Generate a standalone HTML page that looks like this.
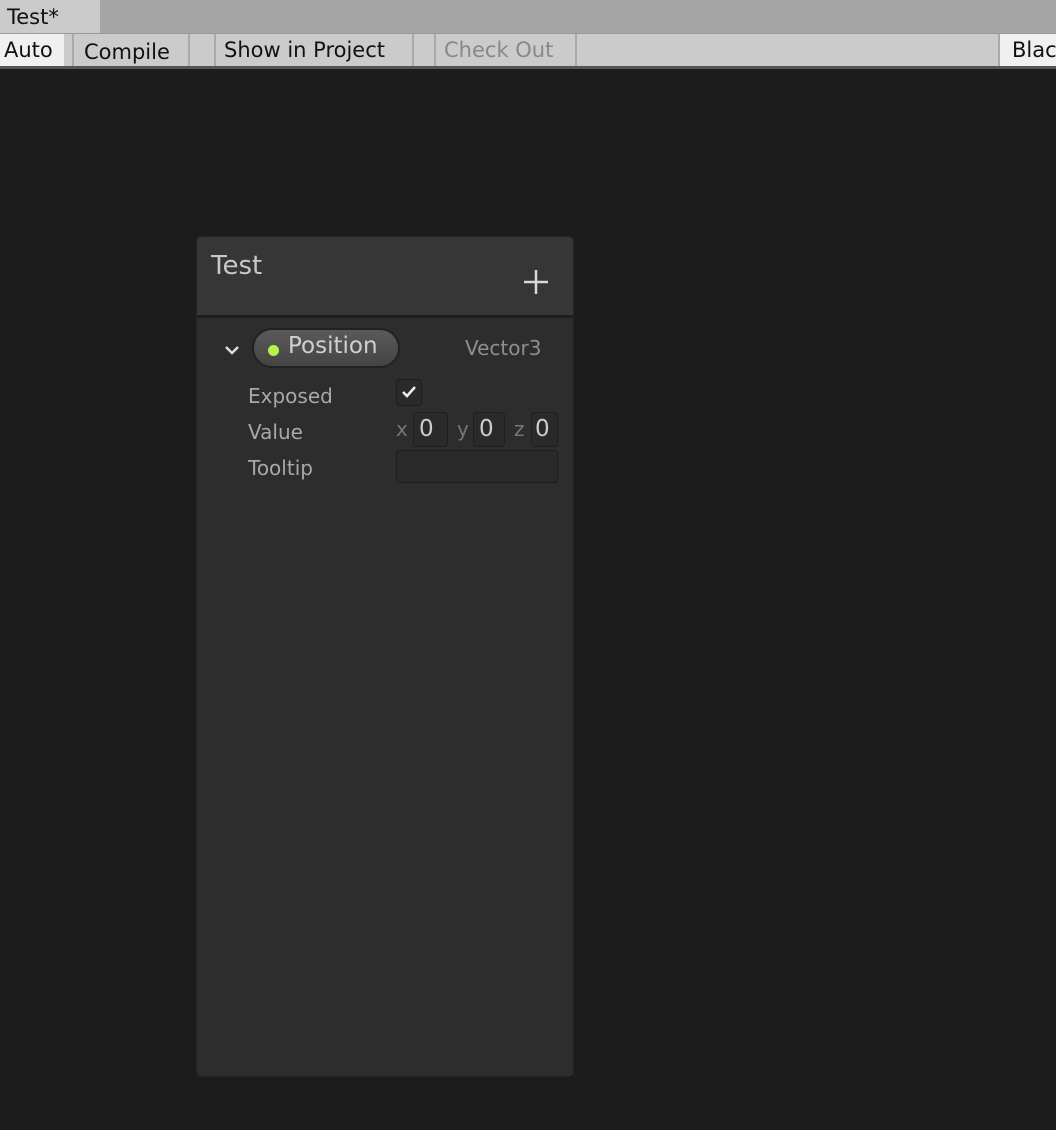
<!DOCTYPE html>
<html><head><style>
*{margin:0;padding:0;box-sizing:border-box}
body{width:1056px;height:1130px;background:#1c1c1c;font-family:"DejaVu Sans",sans-serif;position:relative;overflow:hidden}
.a{position:absolute}
.tb{font-size:21px;color:#111;line-height:32px;white-space:nowrap}
.lbl{color:#a8a8a8;font-size:20px}
.box{border:1px solid #1e1e1e;background:#2a2a2a;border-radius:4px}
</style></head><body>
<div class="a" style="left:0;top:0;width:1056px;height:34px;background:#a5a5a5"></div>
<div class="a tb" style="left:0;top:0;width:100px;height:34px;background:#cbcbcb;padding-left:7px;line-height:34px">Test*</div>
<div class="a" style="left:0;top:33px;width:1056px;height:34px;background:#cbcbcb;border-top:1px solid #999"></div>
<div class="a" style="left:0;top:66px;width:1056px;height:3px;background:#555"></div>
<div class="a tb" style="left:0;top:34px;width:64px;height:32px;background:#f0f0f0;padding-left:4px">Auto</div>
<div class="a" style="left:72px;top:34px;width:2px;height:32px;background:#aaa"></div>
<div class="a tb" style="left:84px;top:36px">Compile</div>
<div class="a" style="left:188px;top:34px;width:2px;height:32px;background:#aaa"></div>
<div class="a" style="left:214px;top:34px;width:2px;height:32px;background:#aaa"></div>
<div class="a tb" style="left:224px;top:34px">Show in Project</div>
<div class="a" style="left:412px;top:34px;width:2px;height:32px;background:#aaa"></div>
<div class="a" style="left:434px;top:34px;width:2px;height:32px;background:#aaa"></div>
<div class="a tb" style="left:444px;top:34px;color:#888">Check Out</div>
<div class="a" style="left:575px;top:34px;width:2px;height:32px;background:#aaa"></div>
<div class="a" style="left:998px;top:34px;width:2px;height:32px;background:#aaa"></div>
<div class="a tb" style="left:1000px;top:34px;width:56px;height:32px;background:#f0f0f0;padding-left:12px;overflow:hidden">Black</div>

<div class="a" style="left:196px;top:236px;width:378px;height:841px;background:#2d2d2d;border:1px solid #232323;border-radius:5px;overflow:hidden">
 <div class="a" style="left:0;top:0;width:378px;height:81px;background:#363636;border-bottom:3px solid #1f1f1f"></div>
 <div class="a" style="left:14px;top:14px;font-size:26px;color:#c8c8c8">Test</div>
 <svg class="a" style="left:326px;top:32px" width="26" height="26"><path d="M13 1 V25 M1 13 H25" stroke="#d8d8d8" stroke-width="2.5"/></svg>
 <svg class="a" style="left:26px;top:106px" width="18" height="14"><path d="M3 4 L9 10 L15 4" stroke="#ddd" stroke-width="2.5" fill="none"/></svg>
 <div class="a" style="left:55px;top:91px;width:148px;height:40px;border-radius:20px;background:linear-gradient(#5a5a5a,#444);border:2px solid #222"></div>
 <div class="a" style="left:71px;top:108px;width:11px;height:11px;border-radius:50%;background:#b6f34a"></div>
 <div class="a" style="left:91px;top:96px;font-size:23px;color:#d0d0d0">Position</div>
 <div class="a lbl" style="left:268px;top:99px;color:#8e8e8e">Vector3</div>
 <div class="a lbl" style="left:51px;top:147px">Exposed</div>
 <div class="a box" style="left:199px;top:142px;width:26px;height:27px"></div>
 <svg class="a" style="left:201px;top:145px" width="22" height="20"><path d="M5 10 L9 14 L17 5" stroke="#eee" stroke-width="2.5" fill="none"/></svg>
 <div class="a lbl" style="left:51px;top:183px">Value</div>
 <div class="a lbl" style="left:199px;top:180px;color:#777">x</div>
 <div class="a box" style="left:216px;top:175px;width:35px;height:35px"></div>
 <div class="a" style="left:222px;top:179px;font-size:23px;color:#ccc">0</div>
 <div class="a lbl" style="left:260px;top:180px;color:#777">y</div>
 <div class="a box" style="left:276px;top:175px;width:32px;height:35px"></div>
 <div class="a" style="left:282px;top:179px;font-size:23px;color:#ccc">0</div>
 <div class="a lbl" style="left:317px;top:180px;color:#777">z</div>
 <div class="a box" style="left:334px;top:175px;width:27px;height:35px"></div>
 <div class="a" style="left:338px;top:179px;font-size:23px;color:#ccc">0</div>
 <div class="a lbl" style="left:51px;top:219px">Tooltip</div>
 <div class="a box" style="left:199px;top:213px;width:162px;height:33px"></div>
</div>
</body></html>
